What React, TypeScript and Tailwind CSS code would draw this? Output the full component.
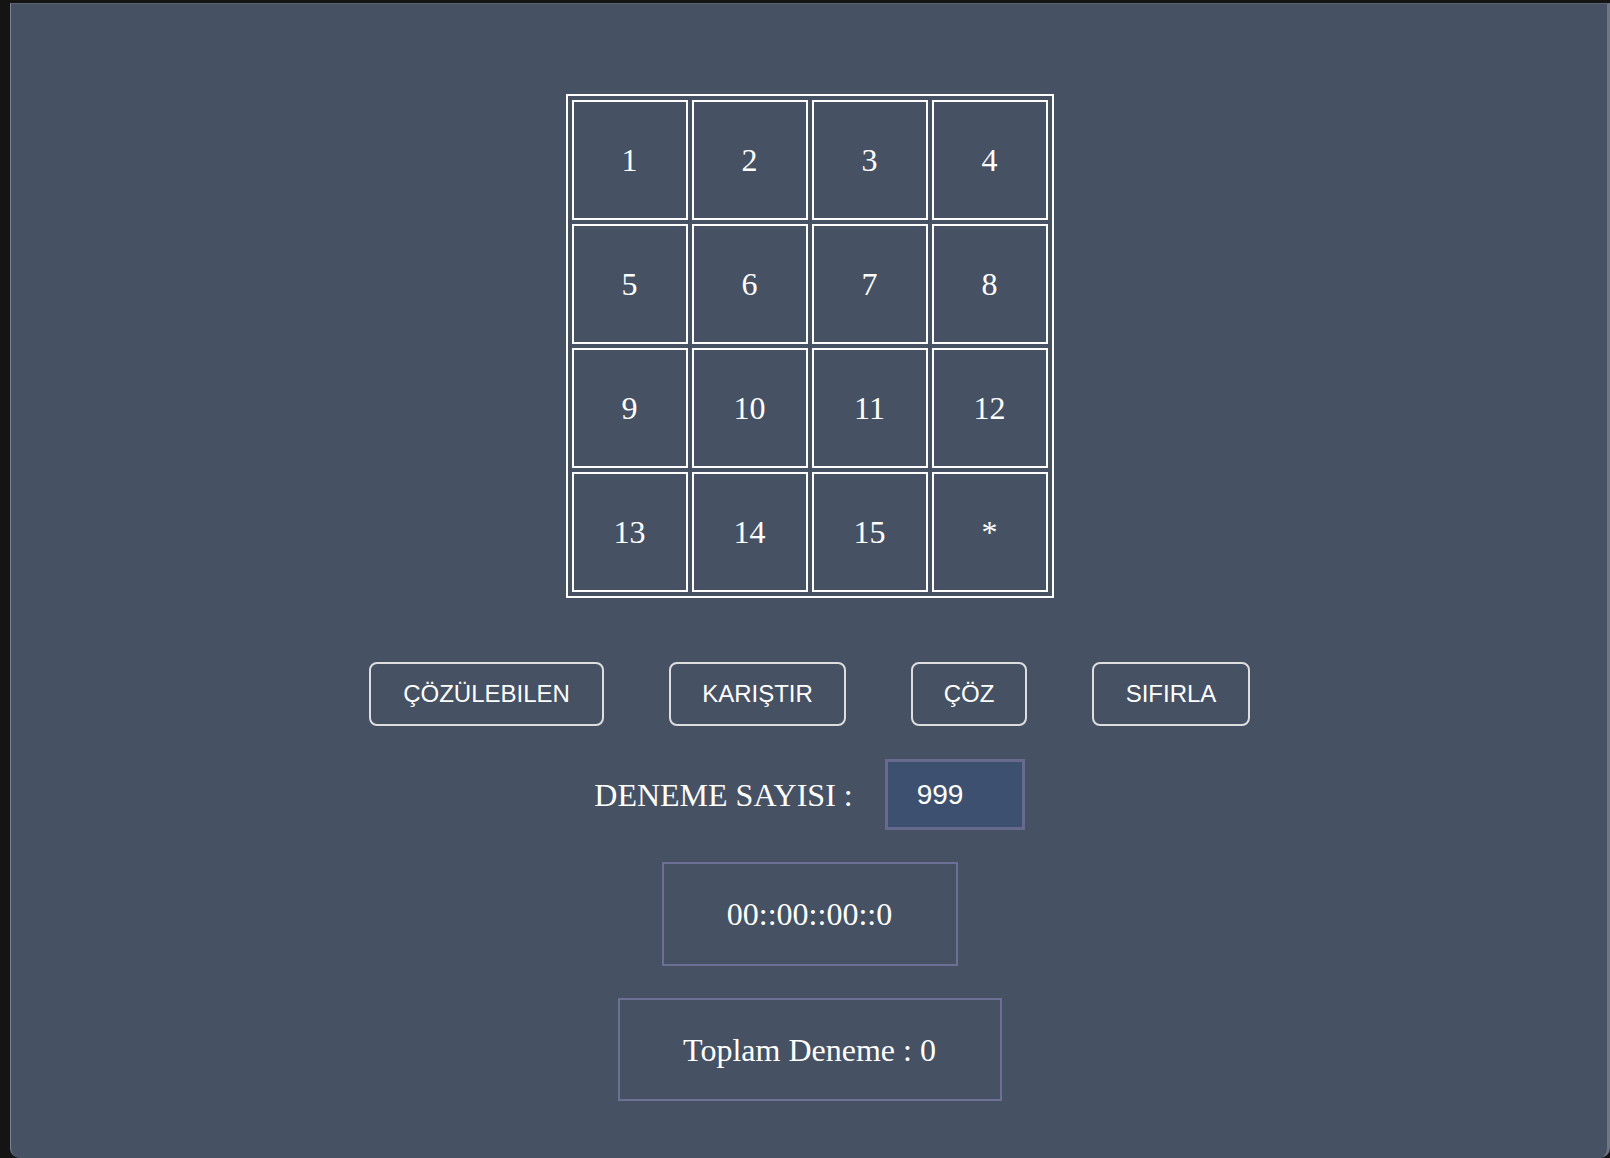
import { useState } from 'react';

const serif = "font-['Liberation_Serif','Times_New_Roman',serif]";
const sans = "font-['Liberation_Sans',Arial,sans-serif]";

const tiles = ['1', '2', '3', '4', '5', '6', '7', '8', '9', '10', '11', '12', '13', '14', '15', '*'];
const actions = [
  { label: 'ÇÖZÜLEBILEN', w: 'w-[235px]' },
  { label: 'KARIŞTIR', w: 'w-[177px]' },
  { label: 'ÇÖZ', w: 'w-[116px]' },
  { label: 'SIFIRLA', w: 'w-[158px]' },
];

export default function App() {
  const [tries, setTries] = useState('999');

  return (
    <div className="w-[1610px] h-[1158px] bg-[#141414] overflow-hidden">
      <div className="ml-[10px] mt-[3px] h-[1155px] bg-[#465264] border-l border-t border-l-[#7b8390] border-t-[#5a6270] border-r-[3px] border-r-[#6f7682] rounded-b-[10px] flex flex-col items-center pt-[90px] pl-[1px]">
        {/* puzzle board */}
        <div className="grid grid-cols-[repeat(4,116px)] gap-[4px] border-2 border-white p-[4px]">
          {tiles.map(t => (
            <div
              key={t}
              className={`h-[120px] border-2 border-white flex items-center justify-center text-white text-[32px] ${serif}`}
            >
              {t}
            </div>
          ))}
        </div>

        <div className="mt-[64px] flex gap-[65px]">
          {actions.map(a => (
            <button
              key={a.label}
              className={`${a.w} h-[64px] border-2 border-[#dedede] rounded-[8px] text-white text-[24px] ${sans}`}
            >
              {a.label}
            </button>
          ))}
        </div>

        <div className="mt-[33px] flex items-center gap-[32px]">
          <span className={`text-white text-[32px] leading-[34px] ${serif}`}>DENEME SAYISI :</span>
          <input
            value={tries}
            onChange={e => setTries(e.target.value)}
            className={`w-[140px] h-[71px] border-[3px] border-[#676a8d] bg-[#3e5070] pl-[29px] text-white text-[28px] outline-none ${sans}`}
          />
        </div>

        <div className={`mt-[32px] w-[296px] h-[104px] border-2 border-[#6b7094] flex items-center justify-center text-white text-[32px] ${serif}`}>
          00::00::00::0
        </div>

        <div className={`mt-[32px] w-[384px] h-[103px] border-2 border-[#6b7094] flex items-center justify-center text-white text-[32px] ${serif}`}>
          Toplam Deneme : 0
        </div>
      </div>
    </div>
  );
}
